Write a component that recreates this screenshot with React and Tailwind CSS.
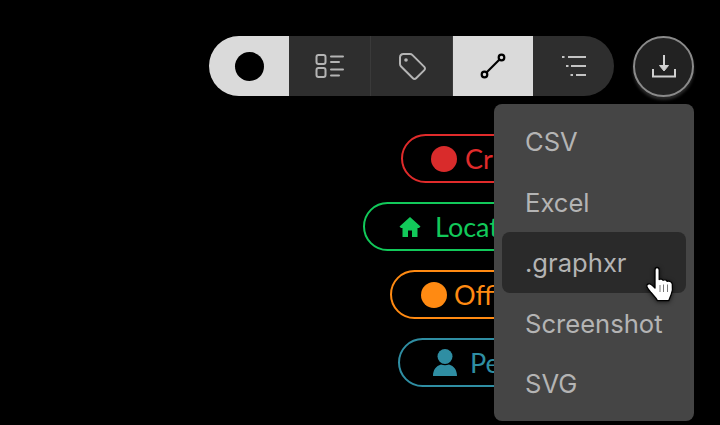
import React from 'react';

const Segment = ({ active, className = '', children }) => (
  <div className={`flex h-full items-center justify-center ${active ? 'bg-[#dadada]' : 'bg-[#2e2e2e]'} ${className}`}>
    {children}
  </div>
);

const ChecklistIcon = () => (
  <svg width="30" height="26" viewBox="0 0 30 26" fill="none" stroke="#b4b4b4" strokeWidth="2" strokeLinecap="round">
    <rect x="1.5" y="2" width="9" height="9" rx="2" />
    <rect x="1.5" y="15" width="9" height="9" rx="2" />
    <path d="M16 3.500H28M16 9H24M16 16.500H28M16 22.500H24" />
  </svg>
);

const TagIcon = () => (
  <svg width="30" height="30" viewBox="0 0 30 30" fill="none" stroke="#b4b4b4" strokeWidth="2" strokeLinejoin="round">
    <path d="M3 6.500C3 4.500 4.500 3 6.500 3H13C14 3 14.800 3.400 15.500 4.100L27.300 15.900C28.200 16.800 28.200 18.200 27.300 19.100L19.100 27.300C18.200 28.200 16.800 28.200 15.900 27.300L4.100 15.500C3.400 14.800 3 14 3 13Z" />
    <circle cx="9" cy="9" r="1.800" fill="#b4b4b4" stroke="none" />
  </svg>
);

const EdgeIcon = () => (
  <svg width="26" height="26" viewBox="0 0 26 26" fill="none" stroke="#000" strokeWidth="2.200">
    <circle cx="4.500" cy="21.500" r="2.800" />
    <circle cx="21.500" cy="4.500" r="2.800" />
    <path d="M6.500 19.500L19.500 6.500" />
  </svg>
);

const ListIcon = () => (
  <svg width="26" height="22" viewBox="0 0 26 22" fill="none" stroke="#c4c4c4" strokeWidth="2">
    <path d="M1 2H3.500M7 2H25M5 11H7.500M10 11H25M9.500 20H12M15 20H25" />
  </svg>
);

const DownloadIcon = () => (
  <svg width="24" height="23" viewBox="0 0 24 23" fill="none" stroke="#d0d0d0" strokeWidth="2">
    <path d="M1 14V21.500H23V14" />
    <path d="M12 0V15" />
    <path d="M7.500 10.500L12 16L16.500 10.500Z" fill="#d0d0d0" strokeWidth="1" strokeLinejoin="round" />
  </svg>
);

const HomeIcon = () => (
  <svg width="22" height="20" viewBox="0 0 22 20" fill="#12c95a">
    <path d="M11 0L0.500 9.500L2 11H3.500V20H9V13.500H13V20H18.500V11H20L21.500 9.500Z" />
  </svg>
);

const PersonIcon = () => (
  <svg width="24" height="28" viewBox="0 0 24 28" fill="#2f8ea3">
    <circle cx="12" cy="7.500" r="7.500" />
    <path d="M0 27C0 21 3 17 8 15.500C10.500 16.500 13.500 16.500 16 15.500C21 17 24 21 24 27Z" />
  </svg>
);

const HandCursor = () => (
  <svg width="30" height="36" viewBox="0 0 30 36" fill="#fff" stroke="#000" strokeWidth="1.300" strokeLinejoin="round" className="drop-shadow-[0_1px_2px_rgba(0,0,0,0.6)]">
    <path d="M10 19V4C10 2.300 11 1.500 12 1.500C13.300 1.500 14.200 2.500 14.200 4V13.500C15.200 12.800 17.300 12.900 18 14.300C19 13.500 21.300 13.800 22 15.300C23.300 14.700 26.700 15 27.300 18C27.800 22 27.300 26 26.200 28.500C25.200 31 24.200 33.500 23.700 34.700H12.500C11.500 32.500 8.500 29.500 6 26.500C4.300 24.500 1.800 21.800 1.800 20C1.800 18.300 3.500 17.300 5.200 18C6.500 18.600 8.500 20.500 10 22Z" />
    <path d="M15 19V26M18.500 18.500V26M22.500 18.500V26" fill="none" strokeWidth="0.800" stroke="#555" />
  </svg>
);

const pills = [
  { label: 'Critical', cls: 'ml-[401px] w-[190px] gap-[8px] border-[#e02b2b] text-[#e02b2b] pl-[28px]', icon: <span className="h-[26px] w-[26px] rounded-full bg-[#d92b2b]" /> },
  { label: 'Location', cls: 'ml-[363px] w-[240px] gap-[14px] border-[#12c95a] text-[#12c95a] pl-[34px]', icon: <HomeIcon /> },
  { label: 'Office', cls: 'ml-[390px] w-[200px] gap-[7px] border-[#ff8a12] text-[#ff8a12] pl-[29px]', icon: <span className="h-[26px] w-[26px] rounded-full bg-[#ff8a12]" /> },
  { label: 'Person', cls: 'ml-[398px] w-[190px] gap-[13px] border-[#2f8ea3] text-[#2f8ea3] pl-[33px]', icon: <PersonIcon /> },
];

const menuItems = ['CSV', 'Excel', '.graphxr', 'Screenshot', 'SVG'];

export default function App() {
  return (
    <div className="relative h-[425px] w-[720px] overflow-hidden bg-black font-['Lato',sans-serif]">
      {/* toolbar */}
      <div className="ml-[209px] flex items-start gap-[19px] pt-[36px]">
        <div className="flex h-[60px] w-[405px] overflow-hidden rounded-full">
          <Segment active className="w-[80px]">
            <span className="ml-[1px] h-[29px] w-[29px] rounded-full bg-black" />
          </Segment>
          <Segment className="w-[82px] border-r border-[#3a3a3a]"><ChecklistIcon /></Segment>
          <Segment className="w-[82px] border-r border-[#3a3a3a]"><TagIcon /></Segment>
          <Segment active className="w-[80px]"><EdgeIcon /></Segment>
          <Segment className="w-[81px]"><ListIcon /></Segment>
        </div>
        <button className="flex h-[61px] w-[61px] items-center justify-center rounded-full border-2 border-[#8a8a8a] bg-[#222] shadow-[0_3px_3px_#2a2a2a]">
          <DownloadIcon />
        </button>
      </div>

      {/* pills behind the menu */}
      <div className="mt-[37px] flex flex-col gap-[19px]">
        {pills.map((p) => (
          <div key={p.label} className={`flex h-[49px] items-center rounded-full border-2 text-[27px] ${p.cls}`}>
            {p.icon}
            <span className="pt-[1px]">{p.label}</span>
          </div>
        ))}
      </div>

      {/* export menu */}
      <div className="absolute left-[494px] top-[104px] flex h-[317px] w-[200px] flex-col rounded-[8px] bg-[#454545] px-[8px] py-[7px] font-['Inter',sans-serif] text-[25.6px] text-[#b4b4b4]">
        {menuItems.map((item) => (
          <div key={item} className={`flex h-[60.5px] items-center rounded-[8px] pl-[23px] pt-[2px] ${item === '.graphxr' ? 'bg-[#2a2a2a]' : ''}`}>
            {item}
          </div>
        ))}
      </div>

      <div className="absolute left-[645px] top-[266px]">
        <HandCursor />
      </div>
    </div>
  );
}
